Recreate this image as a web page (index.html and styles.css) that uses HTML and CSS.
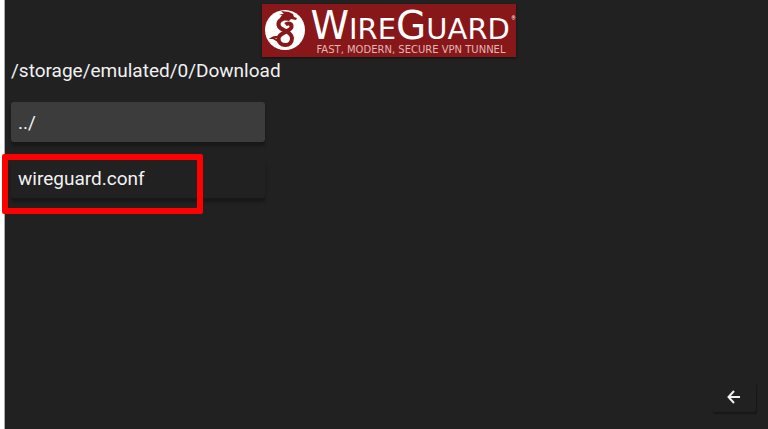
FILE: index.html
```html
<!DOCTYPE html>
<html lang="en">
<head>
    <meta charset="UTF-8">
    <meta name="viewport" content="width=device-width, initial-scale=1.0">
    <title>WireGuard</title>
    <link rel="stylesheet" href="styles.css">
</head>
<body>
    <div class="app">
        <header>
            <div class="logo">
                <svg class="emblem" viewBox="0 0 40 40" aria-hidden="true">
                    <circle class="disc" cx="20" cy="20" r="20"/>
                    <!-- coiled body -->
                    <path class="coil" d="M23 8C16 8 12 12 14 16.500C16 20.500 26.500 21 27 28C27 33 24 35 20.500 35C16 35 13.500 32 13.500 28.500C14 22 26 21.500 26.500 17C27 13.500 23 12.500 20.500 14.500"/>
                    <!-- tail -->
                    <path class="tail" d="M14 31C11 31 10 28 7 28C10 26 12 28 15 26"/>
                    <!-- head with crest -->
                    <path class="head" d="M15 8L17 5L14 4L19 4L16 1L24 2L28 4L29 7L32 8L31 10L26 9L24 11L19 10Z"/>
                </svg>
                <div class="wordmark">
                    <h1><span class="cap">W</span>IRE<span class="cap">G</span>UARD</h1>
                    <p>FAST, MODERN, SECURE VPN TUNNEL</p>
                </div>
                <span class="mark">®</span>
            </div>
        </header>

        <main>
            <h2>/storage/emulated/0/Download</h2>
            <div class="file-list">
                <button type="button" class="file active">../</button>
                <button type="button" class="file">wireguard.conf</button>
                <div class="highlight"></div>
            </div>
        </main>

        <footer>
            <button type="button" class="back" aria-label="Back">
                <svg viewBox="0 0 14 14" aria-hidden="true">
                    <path d="M13 7H2M7 1L1.500 7L7 13"/>
                </svg>
            </button>
        </footer>
    </div>
</body>
</html>
```
FILE: styles.css
```css
:root {
    --background-color: #212121;
    --active-color: #3c3c3c;
    --brand-color: #88171a;
    --text-color: #f2f2f2;
}

* {
    margin: 0;
    padding: 0;
    box-sizing: border-box;
}

body {
    font-family: Roboto, sans-serif;
    background-color: #fff;
    color: var(--text-color);
}

button {
    border: none;
    background-color: var(--background-color);
    color: inherit;
    font-family: inherit;
    cursor: pointer;
}

.app {
    display: flex;
    flex-direction: column;
    min-height: 100vh;
    margin-left: 4px;
    padding: 4px 0 17px 6px;
    border-left: 1px solid #aaa;
    background-color: var(--background-color);
}

header {
    display: flex;
    justify-content: center;
    padding-right: 2px;
}

.logo {
    position: relative;
    display: flex;
    gap: 6px;
    width: 254px;
    height: 53px;
    padding: 6px 3px;
    background-color: var(--brand-color);
    box-shadow: 0 1px 2px #111;
    color: #fff;
}

.emblem {
    flex: none;
    width: 40px;
    height: 40px;
}

.disc {
    fill: #fff;
}

.coil {
    fill: none;
    stroke: var(--brand-color);
    stroke-width: 4;
}

.tail {
    fill: none;
    stroke: var(--brand-color);
    stroke-width: 2;
}

.head {
    fill: var(--brand-color);
}

.wordmark {
    font-family: "DejaVu Sans", sans-serif;
    white-space: nowrap;
}

.wordmark h1 {
    font-size: 29px;
    font-weight: normal;
    line-height: 32px;
}

.wordmark .cap {
    font-size: 39px;
}

.wordmark p {
    padding-left: 6px;
    color: #e0b8b8;
    font-size: 10px;
    line-height: 10px;
}

.mark {
    position: absolute;
    top: 12px;
    right: 0;
    font-size: 5px;
    line-height: 5px;
}

main {
    flex: 1;
}

h2 {
    font-size: 19px;
    font-weight: normal;
    line-height: 28px;
}

.file-list {
    position: relative;
    display: flex;
    flex-direction: column;
    gap: 16px;
    width: 33.5%;
    margin-top: 17px;
}

.file {
    height: 40px;
    padding: 0 7px;
    border-radius: 3px;
    box-shadow: 0 4px 3px #181818;
    font-size: 19px;
    text-align: left;
}

.file.active {
    background-color: var(--active-color);
}

/* frame around the selected config file */
.highlight {
    position: absolute;
    top: 52px;
    left: -9px;
    width: 201px;
    height: 60px;
    border: 6px solid #f00;
    border-radius: 2px;
    pointer-events: none;
}

footer {
    display: flex;
    justify-content: flex-end;
    padding-right: 12px;
}

.back {
    display: flex;
    align-items: center;
    justify-content: center;
    width: 44px;
    height: 30px;
    border-radius: 2px;
    box-shadow: 1px 2px 1px #181818;
}

.back svg {
    width: 14px;
    height: 14px;
    fill: none;
    stroke: var(--text-color);
    stroke-width: 2;
}
```
